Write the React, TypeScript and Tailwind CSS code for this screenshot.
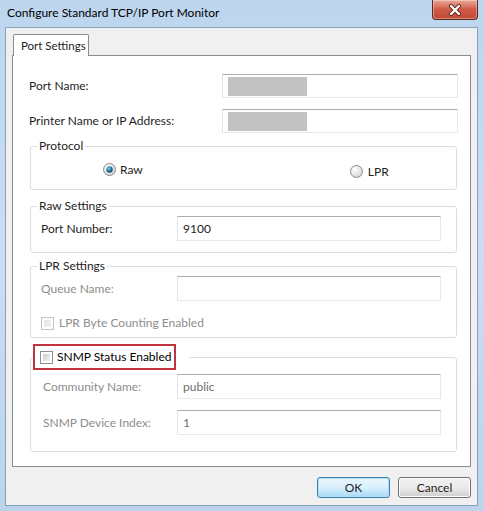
import React from 'react';

const font = "font-['Lato','Liberation_Sans',sans-serif]";

function TextBox({ value, muted, blurred, className = '' }: { value?: string; muted?: boolean; blurred?: boolean; className?: string }) {
  return (
    <div
      className={`bg-white border border-[#e3e9ef] border-t-[#abadb3] border-l-[#e2e3ea] flex items-center pl-[5px] ${muted ? 'text-[#6d6d6d]' : 'text-[#1e1e1e]'} ${className}`}
    >
      {blurred ? <div className="w-[79px] h-[19px] bg-[#c2c2c2]" /> : value}
    </div>
  );
}

function Radio({ checked }: { checked?: boolean }) {
  return (
    <svg width="13" height="13" viewBox="0 0 13 13">
      <defs>
        <radialGradient id={checked ? 'rbOn' : 'rbOff'} cx="0.35" cy="0.3" r="0.8">
          <stop offset="0" stopColor="#ffffff" />
          <stop offset="1" stopColor="#cfd1d3" />
        </radialGradient>
        <radialGradient id="dot" cx="0.4" cy="0.35" r="0.7">
          <stop offset="0" stopColor="#8fd2f5" />
          <stop offset="0.5" stopColor="#2c7ea8" />
          <stop offset="1" stopColor="#103b5c" />
        </radialGradient>
      </defs>
      <circle cx="6.5" cy="6.5" r="6" fill={checked ? 'url(#rbOn)' : 'url(#rbOff)'} stroke="#8a8c8e" strokeWidth="1" />
      {checked && <circle cx="6.5" cy="6.5" r="3.2" fill="url(#dot)" />}
    </svg>
  );
}

function Checkbox({ disabled }: { disabled?: boolean }) {
  return (
    <div className={`w-[13px] h-[13px] border ${disabled ? 'border-[#c4c4c4]' : 'border-[#8f8f8f]'} bg-white p-[2px] shrink-0`}>
      <div className={`w-full h-full bg-gradient-to-br ${disabled ? 'from-[#e4e4e4] to-[#f2f2f2]' : 'from-[#c9c9c9] to-[#f3f3f3]'}`} />
    </div>
  );
}

function Group({ legend, children, className = '' }: { legend: React.ReactNode; children: React.ReactNode; className?: string }) {
  return (
    <fieldset className={`w-[427px] border border-[#d5dfe5] rounded-[3px] ${className}`}>
      <legend className="ml-[6px] px-[2px] leading-[16px]">{legend}</legend>
      {children}
    </fieldset>
  );
}

export default function App() {
  return (
    <div className={`w-[484px] h-[511px] overflow-hidden bg-gradient-to-b from-[#bdd5ee] via-[#cadef3] to-[#bcd3ec] flex flex-col text-[12px] leading-[16px] whitespace-nowrap text-[#1e1e1e] ${font}`}>
      {/* title bar */}
      <div className="h-[27px] shrink-0 flex items-start">
        <span className="ml-[7px] mt-[5px] text-black">Configure Standard TCP/IP Port Monitor</span>
        <div className="ml-auto mr-[6px] w-[46px] h-[20px] rounded-b-[4px] border border-t-0 border-[#5b2a24] bg-gradient-to-b from-[#e8a898] via-[#cf5a45] to-[#c24a35] flex items-center justify-center shadow-[inset_0_0_0_1px_rgba(255,255,255,0.35)]">
          <svg width="14" height="12" viewBox="0 0 14 12">
            <path d="M3 2 L11 10 M11 2 L3 10" stroke="#5a2418" strokeWidth="4" strokeLinecap="round" />
            <path d="M3 2 L11 10 M11 2 L3 10" stroke="#ffffff" strokeWidth="2.4" strokeLinecap="round" />
          </svg>
        </div>
      </div>

      {/* client area */}
      <div className="ml-[5px] w-[473px] h-[479px] bg-[#f0f0f0] border border-[#8aa1bb] flex flex-col pl-[6px] pt-[6px]">
        {/* tab header */}
        <div className="flex h-[21px] relative z-10">
          <div className="ml-[1px] w-[76px] h-[22px] bg-white border border-b-0 border-[#898c95] rounded-t-[2px] pl-[7px] pt-[3px] text-[11.5px]">
            Port Settings
          </div>
        </div>

        {/* tab panel */}
        <div className="w-[459px] h-[412px] bg-white border border-[#898c95] flex flex-col pl-[16px] pt-[18px]">
          <div className="flex items-center">
            <span className="w-[193px]">Port Name:</span>
            <TextBox blurred className="w-[236px] h-[24px]" />
          </div>
          <div className="flex items-center mt-[11px]">
            <span className="w-[193px]">Printer Name or IP Address:</span>
            <TextBox blurred className="w-[236px] h-[24px]" />
          </div>

          <Group legend="Protocol" className="ml-[1px] mt-[5px] h-[52px]">
            <div className="flex items-center h-[35px]">
              <div className="ml-[72px] flex items-center gap-[4px] mb-[4px]">
                <Radio checked />
                <span>Raw</span>
              </div>
              <div className="ml-[207px] flex items-center gap-[5px]">
                <Radio />
                <span>LPR</span>
              </div>
            </div>
          </Group>

          <Group legend="Raw Settings" className="ml-[1px] mt-[8px] h-[55px]">
            <div className="flex items-center pl-[10px] pt-[2px]">
              <span className="w-[136px]">Port Number:</span>
              <TextBox value="9100" className="w-[264px] h-[25px]" />
            </div>
          </Group>

          <Group legend="LPR Settings" className="ml-[1px] mt-[5px] h-[80px]">
            <div className="flex items-center pl-[10px] pt-[2px]">
              <span className="w-[136px] text-[#8d8d8d]">Queue Name:</span>
              <TextBox className="w-[264px] h-[25px]" />
            </div>
            <div className="flex items-center gap-[5px] pl-[10px] mt-[14px] text-[#8d8d8d]">
              <Checkbox disabled />
              <span>LPR Byte Counting Enabled</span>
            </div>
          </Group>

          <fieldset className="ml-[1px] mt-[6px] w-[427px] h-[108px] border border-[#d5dfe5] rounded-[3px]">
            <legend className="ml-[2px] pr-[13px]">
              <div className="h-[26px] w-[143px] border-2 border-[#c1333d] flex items-center gap-[4px] pl-[5px]">
                <Checkbox />
                <span className="text-black">SNMP Status Enabled</span>
              </div>
            </legend>
            <div className="flex items-center pl-[12px] pt-[4px]">
              <span className="w-[134px] text-[#8d8d8d]">Community Name:</span>
              <TextBox value="public" muted className="w-[264px] h-[25px]" />
            </div>
            <div className="flex items-center pl-[12px] mt-[11px]">
              <span className="w-[134px] text-[#8d8d8d]">SNMP Device Index:</span>
              <TextBox value="1" muted className="w-[264px] h-[25px]" />
            </div>
          </fieldset>
        </div>

        {/* buttons */}
        <div className="flex justify-end gap-[8px] mt-[10px] w-[459px]">
          <button className="w-[73px] h-[21px] rounded-[3px] border border-[#3c7fb1] bg-gradient-to-b from-[#eaf6fd] via-[#d9f0fc] to-[#a7d9f5] shadow-[inset_0_0_0_1px_#b4e0f7] text-[#1e1e1e]">
            OK
          </button>
          <button className="w-[73px] h-[21px] rounded-[3px] border border-[#707070] bg-gradient-to-b from-[#f2f2f2] via-[#ebebeb] to-[#cfcfcf] shadow-[inset_0_0_0_1px_#fcfcfc] text-[#1e1e1e]">
            Cancel
          </button>
        </div>
      </div>
    </div>
  );
}
